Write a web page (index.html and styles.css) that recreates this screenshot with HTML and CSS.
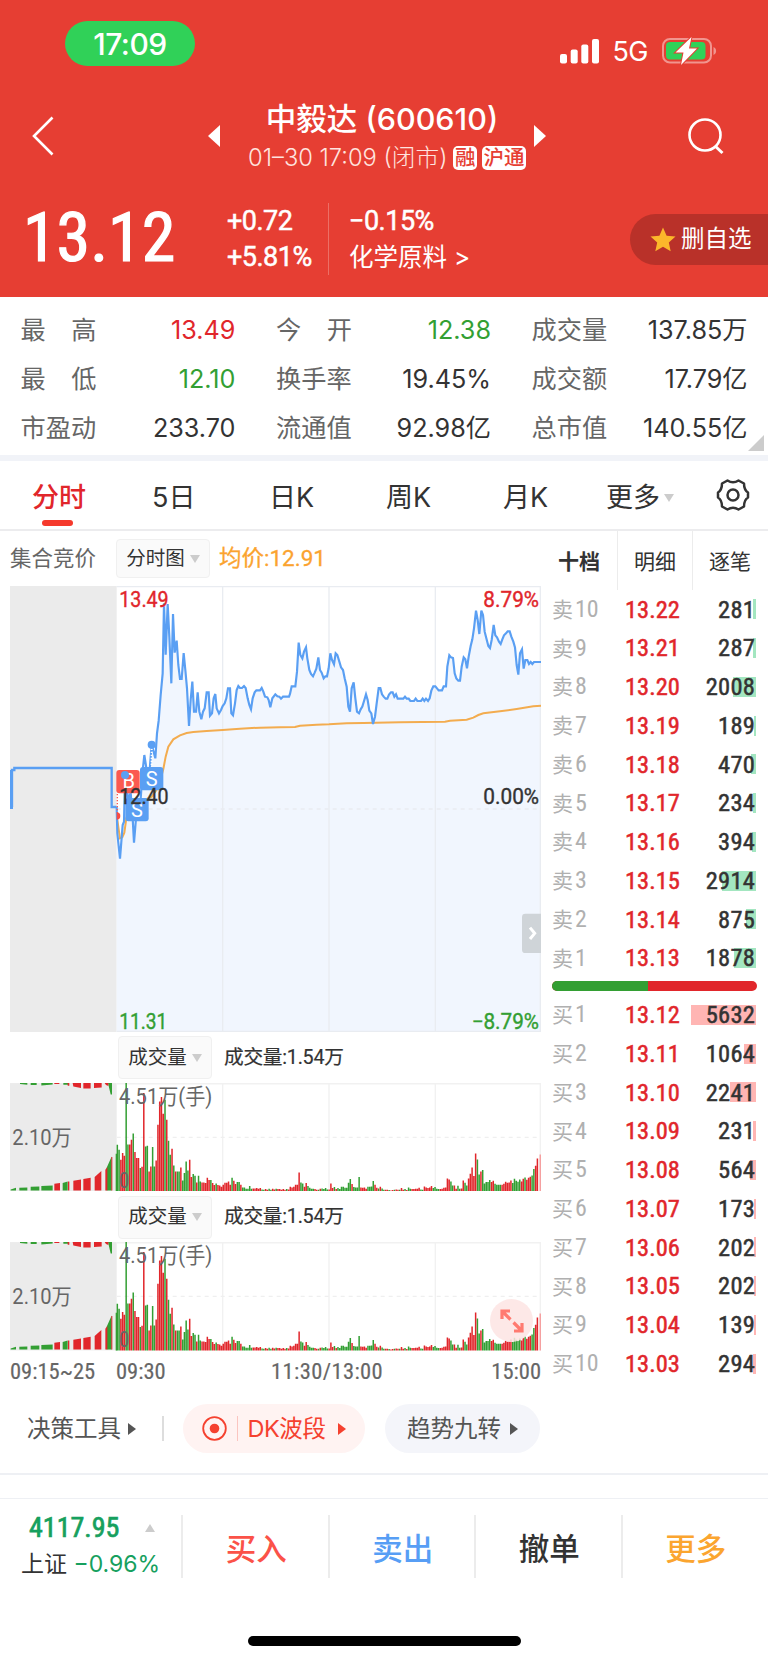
FILE: index.html
```html
<!DOCTYPE html>
<html lang="zh-CN">
<head>
    <meta charset="UTF-8">
    <meta name="viewport" content="width=device-width, initial-scale=1.0">
    <title>中毅达 (600610)</title>
    <link rel="stylesheet" href="styles.css">
</head>
<body>
    <header>
        <div class="status-bar">
            <span class="clock">17:09</span>
            <div class="status-right">
                <svg class="signal" width="40" height="25" viewBox="0 0 40 25" fill="#fff">
                    <rect x="0" y="15" width="7" height="9.5" rx="2"/>
                    <rect x="10.7" y="10.5" width="7" height="14" rx="2"/>
                    <rect x="21.3" y="5.5" width="7" height="19" rx="2"/>
                    <rect x="32" y="0" width="7" height="24.5" rx="2"/>
                </svg>
                <span class="network">5G</span>
                <svg width="55" height="28" viewBox="0 0 55 28">
                    <rect x="1" y="2" width="48" height="23.5" rx="7" fill="none" stroke="#fff" stroke-opacity=".45" stroke-width="2"/>
                    <rect x="4" y="5" width="39.5" height="17.5" rx="4" fill="#30d158"/>
                    <path d="M51.5 10v8c1.6-.7 2.6-2.200 2.600-4s-1-3.300-2.600-4z" fill="#fff" opacity=".45"/>
                    <path d="M29.500 0 13.500 15.500h8L19 28l16-16.500h-8z" fill="#fff" stroke="#e63e33" stroke-width="2" paint-order="stroke"/>
                </svg>
            </div>
        </div>

        <div class="title-bar">
            <svg class="back" width="24" height="42" viewBox="0 0 24 42"><path d="M21.500 2.500 3 21l18.500 18.500" fill="none" stroke="#fff" stroke-width="2.600"/></svg>
            <div class="title-box">
                <span class="tri-left"></span>
                <div class="title-text">
                    <h1>中毅达 (600610)</h1>
                    <p><span class="date">01–30 17:09 (闭市)</span><b class="tag">融</b><b class="tag">沪通</b></p>
                </div>
                <span class="tri-right"></span>
            </div>
            <svg class="search" width="36" height="38" viewBox="0 0 36 38"><circle cx="17" cy="18" r="15.500" fill="none" stroke="#fff" stroke-width="2.600"/><path d="M27 29l7.500 7" stroke="#fff" stroke-width="3"/></svg>
        </div>

        <div class="quote">
            <div class="price">13.12</div>
            <div class="change">
                <span>+0.72</span>
                <span>+5.81%</span>
            </div>
            <div class="sector">
                <span class="num">−0.15%</span>
                <span>化学原料 &gt;</span>
            </div>
            <div class="favor">
                <svg width="26" height="25" viewBox="0 0 26 25"><path d="M13 .5l3.600 8.200 8.900.900-6.700 5.900 1.900 8.800L13 19.700l-7.700 4.600 1.900-8.800L.5 9.600l8.900-.900z" fill="#fcb72b"/></svg>
                <span>删自选</span>
            </div>
        </div>
    </header>

    <section class="stats">
        <div class="stat"><label>最<i></i>高</label><span class="red">13.49</span></div>
        <div class="stat"><label>今<i></i>开</label><span class="green">12.38</span></div>
        <div class="stat"><label>成交量</label><span>137.85万</span></div>
        <div class="stat"><label>最<i></i>低</label><span class="green">12.10</span></div>
        <div class="stat"><label>换手率</label><span>19.45%</span></div>
        <div class="stat"><label>成交额</label><span>17.79亿</span></div>
        <div class="stat"><label>市盈动</label><span>233.70</span></div>
        <div class="stat"><label>流通值</label><span>92.98亿</span></div>
        <div class="stat"><label>总市值</label><span>140.55亿</span></div>
        <span class="corner"></span>
    </section>

    <nav class="tabs">
        <span class="tab active">分时</span>
        <span class="tab">5日</span>
        <span class="tab">日K</span>
        <span class="tab">周K</span>
        <span class="tab">月K</span>
        <span class="tab more">更多<i class="caret"></i></span>
        <svg width="34" height="32" viewBox="0 0 34 32" fill="none" stroke="#333" stroke-width="2.500"><path d="M11.500 1.500Q17 5 22.500 1.500L28 4.500Q28 11 32 13.500V18.500Q28 21 28 27.500L22.500 30.500Q17 27 11.500 30.500L6 27.500Q6 21 2 18.500V13.500Q6 11 6 4.500Z" stroke-linejoin="round"/><circle cx="17" cy="16" r="5.500"/></svg>
    </nav>

    <main>
        <div class="left">
            <div class="chart-head">
                <span class="auction">集合竞价</span>
                <span class="select">分时图<i class="caret"></i></span>
                <span class="avg">均价:12.91</span>
            </div>

            <!-- price chart, 3 units per pixel -->
            <svg class="price-chart" viewBox="30 48 1593 1338">
                <rect x="30" y="48" width="320" height="1338" fill="#ebebeb"/>
                <path id="priceArea" fill="#f1f6fe"/>
                <g fill="none" stroke="#e9ecf1" stroke-width="4">
                    <path d="M350 50H1621V1384H350M668 50V1384M987 50V1384M1306 50V1384"/>
                    <path d="M350 717H1621" stroke-dasharray="12 12"/>
                </g>
                <path d="M34 717V600" fill="none" stroke="#5a9ff3" stroke-width="10"/>
                <path d="M36 711V600H43V594H335V711H350" fill="none" stroke="#5a9ff3" stroke-width="7"/>
                <path d="M352 750L360 805L367 802L373 788L379 745L395 705L430 692L455 680L475 652L490 597L497 560L505 530L520 508L540 496L560 489L580 486L620 483L668 480L720 476L780 473L840 472L885 471L900 467L950 464L987 463L1040 460L1090 459L1200 457L1335 455L1350 452L1400 449L1420 443L1435 435L1450 430L1500 424L1550 417L1600 409L1623 407" fill="none" stroke="#f3ac4f" stroke-width="6"/>
                <path id="priceLine" fill="none" stroke="#5a9ff3" stroke-width="6.500"/>
                <path d="M455 536V592" stroke="#fff" stroke-width="6" stroke-dasharray="4 5"/>
                <path d="M352 672V728" stroke="#fb5a50" stroke-width="4" stroke-dasharray="4 5"/>
                <path d="M350 727a11 11 0 0 1 0 22z" fill="#fb4a40"/>
                <circle cx="455" cy="524" r="12" fill="#5a9ff3"/>
                <rect x="349" y="600" width="70" height="70" rx="9" fill="#fb5a50"/>
                <rect x="420" y="591" width="70" height="70" rx="9" fill="#5a9ff3"/>
                <rect x="376" y="684" width="70" height="70" rx="9" fill="#5a9ff3"/>
                <g class="mark">
                    <text x="386" y="655">B</text>
                    <text x="455" y="648">S</text>
                    <text x="411" y="740">S</text>
                </g>
                <circle cx="375" cy="615" r="12" fill="#5a9ff3"/>
                <g class="axis">
                    <text x="358" y="112" textLength="148" lengthAdjust="spacingAndGlyphs" class="up">13.49</text>
                    <text x="358" y="702" textLength="148" lengthAdjust="spacingAndGlyphs">12.40</text>
                    <text x="358" y="1377" textLength="144" lengthAdjust="spacingAndGlyphs" class="down">11.31</text>
                    <text x="1450" y="112" textLength="167" lengthAdjust="spacingAndGlyphs" class="up">8.79%</text>
                    <text x="1450" y="702" textLength="167" lengthAdjust="spacingAndGlyphs">0.00%</text>
                    <text x="1415" y="1377" textLength="202" lengthAdjust="spacingAndGlyphs" class="down">−8.79%</text>
                </g>
                <path d="M1623 1031H1576q-10 0-10 10v98q0 10 10 10H1623z" fill="#cfd4d8"/>
                <path d="M1590 1073L1604 1090L1590 1107" fill="none" stroke="#fff" stroke-width="9"/>
            </svg>

            <div class="vol-head">
                <span class="select">成交量<i class="caret"></i></span>
                <span class="vol-value">成交量:1.54万</span>
            </div>
            <svg class="vol-chart" viewBox="30 158 1593 325"></svg>

            <div class="vol-head">
                <span class="select">成交量<i class="caret"></i></span>
                <span class="vol-value">成交量:1.54万</span>
            </div>
            <div class="vol-wrap">
                <svg class="vol-chart" viewBox="30 158 1593 325"></svg>
                <span class="expand">
                    <svg width="24" height="24" viewBox="0 0 24 24" fill="none" stroke="#ff7a70" stroke-width="3.200"><path d="M2 10V2H10M2 2l8.500 8.500M22 14v8h-8M22 22l-8.500-8.500"/></svg>
                </span>
            </div>

            <div class="time-axis">
                <span>09:15~25</span>
                <span>09:30</span>
                <span>11:30/13:00</span>
                <span>15:00</span>
            </div>
        </div>

        <div class="book">
            <div class="book-tabs">
                <span class="on">十档</span>
                <span>明细</span>
                <span>逐笔</span>
            </div>
            <div id="sell" class="sell"></div>
            <div class="ratio"><i></i></div>
            <div id="buy" class="buy"></div>
        </div>
    </main>

    <div class="tools">
        <span class="tool">决策工具<i class="play"></i></span>
        <span class="pill dk">
            <svg width="25" height="25" viewBox="0 0 25 25"><circle cx="12.500" cy="12.500" r="11.300" fill="none" stroke="#f5412f" stroke-width="1.800"/><circle cx="12.500" cy="12.500" r="4.800" fill="#f5412f"/></svg>
            <b></b>DK波段<i class="play"></i>
        </span>
        <span class="pill">趋势九转<i class="play"></i></span>
    </div>

    <footer>
        <div class="index">
            <div class="index-top">4117.95<i></i></div>
            <div class="index-bottom">上证 <span>−0.96%</span></div>
        </div>
        <span class="btn buy-btn">买入</span>
        <span class="btn sell-btn">卖出</span>
        <span class="btn">撤单</span>
        <span class="btn more-btn">更多</span>
    </footer>
    <div class="home"></div>

    <script>
        // price line, x y pairs
        var points = "350,711 352,790 360,866 368,765 372,755 375,615 385,690 392,668 398,745 402,818 408,745 413,690 421,700 428,602 433,555 440,600 448,612 455,524 460,542 466,565 471,490 476,452 482,375 488,310 492,100 497,254 503,102 508,200 514,340 519,132 524,248 530,212 535,285 540,327 545,327 551,249 556,300 561,355 567,468 572,390 577,335 582,425 588,425 593,367 598,425 604,448 609,425 614,415 620,367 626,367 630,437 636,430 641,385 646,372 650,415 657,430 663,420 668,408 674,400 679,385 684,355 690,355 694,430 699,436 705,400 710,360 715,348 720,354 726,354 732,348 737,354 743,385 748,405 753,418 758,385 764,367 769,361 780,361 785,354 790,365 795,380 802,382 806,390 811,412 817,385 826,373 832,379 838,380 843,386 849,380 867,380 870,372 875,349 886,349 891,305 896,218 901,255 907,265 912,245 918,232 922,265 928,300 933,312 939,319 944,308 949,296 955,262 960,300 965,308 971,325 976,319 981,319 986,295 991,250 996,270 1002,283 1007,250 1012,255 1018,275 1023,292 1029,300 1034,325 1040,350 1045,410 1050,425 1055,355 1061,337 1066,385 1071,425 1077,430 1082,418 1087,410 1093,390 1098,373 1103,390 1108,422 1114,430 1119,462 1125,440 1130,400 1136,354 1141,354 1146,373 1151,380 1157,386 1162,386 1167,374 1173,367 1178,367 1183,380 1188,373 1193,386 1210,386 1215,380 1220,386 1226,386 1231,393 1242,393 1247,386 1252,393 1263,393 1268,386 1273,393 1278,386 1284,393 1289,385 1294,362 1300,349 1306,349 1311,355 1316,361 1326,361 1331,349 1338,349 1342,290 1348,256 1353,262 1359,264 1364,310 1369,325 1375,332 1380,332 1385,290 1391,262 1396,268 1401,295 1406,260 1412,228 1417,208 1422,175 1428,122 1433,150 1438,192 1444,122 1449,135 1454,185 1459,205 1465,228 1470,234 1475,210 1481,165 1486,196 1491,202 1497,215 1502,222 1507,208 1512,196 1518,190 1523,184 1529,184 1534,200 1540,215 1545,232 1550,285 1555,314 1560,250 1566,238 1571,296 1576,270 1582,270 1587,282 1592,276 1597,282 1602,276 1623,276";
        document.getElementById("priceLine").setAttribute("d", "M" + points.replace(/ /g, "L"));
        document.getElementById("priceArea").setAttribute("d", "M" + points.replace(/ /g, "L") + "V1386H350Z");

        // volume per minute, r = up, g = down
        var vol = ("g140 g125 r95 r115 r107 g325 g141 r141 r155 g174 r118 r100 r100 g70 r74 r295 g135 g137 r60 r75 g133 g75 r93 r200 r270 r283 r233 g275 r215 g152 " +
            "g110 r128 g78 r60 g60 g60 r72 g33 g55 g90 g63 r95 r43 g52 g47 r27 g47 g30 r27 r27 r25 r41 r34 g34 r25 r19 g24 r19 r18 r14 " +
            "r20 r26 r26 r30 r20 g41 r32 r22 g28 g28 r20 g12 g12 g8 g8 g16 g8 r9 r9 r10 r8 r10 g6 g5 r7 r5 g8 g5 r8 r6 " +
            "g8 r7 r7 r5 r7 r5 g7 r6 r14 r12 r14 r20 r20 r57 g27 g24 r14 r25 g16 g11 g8 g8 r7 r5 g5 r8 g9 g7 g10 g6 " +
            "r6 r24 r10 g13 r7 g10 g7 g14 g14 g11 g11 g26 g37 r22 g13 g12 g12 g43 r12 r11 r12 r8 g14 g14 g15 g31 r20 r11 g9 r14 " +
            "g9 g5 r5 r5 g4 r3 r4 g5 r6 r5 g5 r10 r5 g7 r4 g12 g8 r7 r7 r8 r8 r11 g6 g5 r15 r12 r10 r12 r16 g10 " +
            "g13 g8 g7 r7 r8 r11 r12 r39 r36 g30 g18 r18 r8 g17 g8 r9 r33 g26 g18 r39 r53 r72 r46 r114 g96 g51 r60 g64 g24 g28 " +
            "g28 g34 r28 r32 g23 g20 g20 g20 r20 r23 r29 r26 r27 r33 g25 g38 g32 g29 g36 r30 r38 g42 r35 r41 r44 g48 g67 r77 r99").split(" ");

        function bars(color) {
            var d = "";
            vol.forEach(function(v, i) {
                if (v[0] == color) {
                    d += "M" + (352 + i * 5.295).toFixed(1) + " 483v-" + v.slice(1);
                }
            });
            return d;
        }

        var volume =
            '<rect x="30" y="158" width="320" height="325" fill="#ebebeb"/>' +
            '<path d="M350 160H1621V483M668 160V483M987 160V483M1306 160V483" fill="none" stroke="#f1f1f1" stroke-width="4"/>' +
            '<path d="M350 321H1621" stroke="#efefef" stroke-width="4" stroke-dasharray="12 12"/>' +
            // call auction block
            '<path d="M32 480V477L48 472V480zM58 480V472L82 471V480zM92 480V469L118 468V480zM124 480V467L158 465V480zM188 480V458L203 453V480zM320 480V412L335 378V480zM60 158H82V163L60 161zM92 158H110V164H92zM124 158H158V162L124 165zM190 158H204V163H190zM324 158H336V192H332zM347 370H351V483H347z" fill="#339f33"/>' +
            '<path d="M163 480V460L180 458V480zM204 480V453H208V480zM220 480V451L243 447V480zM250 480V446L272 442V480zM284 480V440L304 422V480zM316 480V418L322 410V480zM334 480V380H337V480zM163 158H178V161H163zM203 158H208V166H203zM218 158H243V173L220 168zM250 158H272V174H250zM282 158H305V171L282 173zM314 158H325V167L318 164z" fill="#e1262b"/>' +
            '<path d="' + bars("g") + '" stroke="#339f33" stroke-width="4.500"/>' +
            '<path d="' + bars("r") + '" stroke="#e1262b" stroke-width="4.500"/>' +
            '<path d="M1621 483V372" stroke="#f5a0a0" stroke-width="5"/>' +
            '<g class="vol-text"><text x="357" y="220" textLength="280" lengthAdjust="spacingAndGlyphs">4.51万(手)</text>' +
            '<text x="37" y="343" textLength="178" lengthAdjust="spacingAndGlyphs">2.10万</text>' +
            '<text x="357" y="474" textLength="31" lengthAdjust="spacingAndGlyphs">0</text></g>';
        document.querySelectorAll(".vol-chart").forEach(function(svg) {
            svg.innerHTML = volume;
        });

        // order book
        function rows(id, name, list) {
            document.getElementById(id).innerHTML = list.map(function(row) {
                return '<div class="row"><label>' + name + '<em>' + row[0] + '</em></label><span class="p">' + row[1] +
                    '</span><span class="v"><i style="width:' + (row[2] / 5632 * 65).toFixed(1) + 'px"></i><em>' + row[2] + '</em></span></div>';
            }).join("");
        }
        rows("sell", "卖", [[10, "13.22", 281], [9, "13.21", 287], [8, "13.20", 2008], [7, "13.19", 189], [6, "13.18", 470],
            [5, "13.17", 234], [4, "13.16", 394], [3, "13.15", 2914], [2, "13.14", 875], [1, "13.13", 1878]]);
        rows("buy", "买", [[1, "13.12", 5632], [2, "13.11", 1064], [3, "13.10", 2241], [4, "13.09", 231], [5, "13.08", 564],
            [6, "13.07", 173], [7, "13.06", 202], [8, "13.05", 202], [9, "13.04", 139], [10, "13.03", 294]]);
    </script>
</body>
</html>
```
FILE: styles.css
```css
* {
    box-sizing: border-box;
}

body {
    font-family: Inter, "Noto Sans CJK SC", sans-serif;
    line-height: 1.2;
    margin: 0;
    width: 768px;
    height: 1663px;
    overflow: hidden;
    background-color: #fff;
    color: #333;
}

i, em {
    font-style: normal;
}

svg {
    display: block;
    flex: none;
}

span, label {
    white-space: nowrap;
}

.red { color: #e1262b; }
.green { color: #339f33; }

.caret {
    display: inline-block;
    border: 5.5px solid transparent;
    border-top: 8px solid #ccc;
    border-bottom: 0;
}

/* red header */
header {
    height: 297px;
    background-color: #e63e33;
    color: #fff;
}

.status-bar {
    height: 80px;
    padding: 21px 51px 0 65px;
    display: flex;
    justify-content: space-between;
}

.clock {
    width: 130px;
    height: 45px;
    line-height: 46px;
    border-radius: 23px;
    background-color: #30d158;
    text-align: center;
    font-size: 30px;
    font-weight: 500;
    letter-spacing: -0.5px;
}

.status-right {
    height: 60px;
    display: flex;
    align-items: center;
}

.network {
    font-size: 27px;
    margin: 2px 14px 0 12px;
    letter-spacing: -0.5px;
}

.title-bar {
    height: 110px;
    padding: 1px 44px 0 31px;
    display: flex;
    justify-content: space-between;
    align-items: center;
}

.title-box {
    display: flex;
    align-items: center;
    margin-left: 11px;
}

.title-text {
    width: 314px;
    text-align: center;
}

h1 {
    margin: 0;
    padding-left: 10px;
    font-size: 30.5px;
    line-height: 44px;
    font-weight: 500;
}

.title-text p {
    margin: 0;
    height: 34px;
    padding-left: 25px;
    display: flex;
    align-items: center;
    justify-content: center;
    font-size: 23.7px;
}

.date {
    color: #ffe3df;
    font-weight: 300;
    margin-right: 6px;
    margin-top: 1px;
}

.tag {
    background-color: #fff;
    color: #e63e33;
    border-radius: 5px;
    padding: 0 1.5px;
    margin-right: 5px;
    font-size: 20.5px;
    line-height: 24px;
    font-weight: 500;
}

.tri-left,
.tri-right {
    border: 11.5px solid transparent;
    border-left: 0;
    border-right: 12px solid #fff;
}

.tri-right {
    border-right: 0;
    border-left: 12px solid #fff;
}

.quote {
    height: 98px;
    display: flex;
    align-items: center;
    font-family: Roboto, "Noto Sans CJK SC", sans-serif;
}

.price {
    width: 227px;
    padding-left: 23px;
    font-size: 68px;
    font-stretch: 85%;
    -webkit-text-stroke: 1.2px #fff;
}

.change,
.sector {
    display: flex;
    flex-direction: column;
    font-size: 27px;
    line-height: 36px;
    font-stretch: 88%;
    letter-spacing: -0.5px;
    -webkit-text-stroke: 0.5px #fff;
}

.change {
    width: 102px;
    border-right: 1px solid #ec6f66;
}

.sector {
    width: 281px;
    padding-left: 20px;
}

.sector span + span {
    font-family: Inter, "Noto Sans CJK SC", sans-serif;
    font-size: 24.5px;
    letter-spacing: 0;
    -webkit-text-stroke: 0;
}

.favor {
    flex: 1;
    height: 51px;
    margin-left: 20px;
    padding-left: 20px;
    border-radius: 26px 0 0 26px;
    background-color: #b93129;
    display: flex;
    align-items: center;
    gap: 5px;
    font-size: 23.5px;
}

/* key figures */
.stats {
    height: 158px;
    padding: 9px 20px 0 20.5px;
    display: grid;
    grid-template-columns: 215px 215px 216px;
    grid-auto-rows: 49px;
    column-gap: 40.500px;
    position: relative;
}

.stat {
    display: flex;
    align-items: center;
    justify-content: space-between;
    font-size: 25.2px;
}

.stat label {
    color: #666;
    width: 76px;
    display: flex;
    justify-content: space-between;
}

.corner {
    position: absolute;
    right: 4px;
    bottom: 4px;
    border-left: 16px solid transparent;
    border-bottom: 16px solid #ccc;
}

/* period tabs */
.tabs {
    height: 76px;
    border-top: 6px solid #f1f3f8;
    border-bottom: 2px solid #ececee;
    padding: 0 18px 0 32px;
    display: flex;
    align-items: center;
    font-size: 27px;
}

.tab {
    width: 117px;
    height: 100%;
    line-height: 74px;
}

.tab.more {
    width: 85px;
    margin-right: auto;
    margin-left: -14px;
}

.tab.active {
    width: 120px;
    color: #e1262b;
    font-weight: 500;
}

.tab.active::after {
    content: "";
    display: block;
    width: 31px;
    height: 6px;
    margin: -15px 0 0 10px;
    border-radius: 3px;
    background-color: #f5392c;
}

.tab .caret {
    margin: 0 0 5px 4px;
}

main {
    height: 857px;
    display: flex;
}

.left {
    width: 552px;
    padding-left: 10px;
}

.chart-head {
    height: 54.500px;
    padding-top: 1px;
    display: flex;
    align-items: center;
    font-size: 21.500px;
}

.auction {
    width: 106px;
    color: #666;
}

.select {
    width: 94px;
    height: 39px;
    border: 1px solid #f0f0f0;
    border-radius: 4px;
    background-color: #fafafa;
    display: flex;
    align-items: center;
    justify-content: center;
    gap: 5px;
    font-size: 19.500px;
}

.avg {
    margin-left: 9px;
    color: #fba32f;
    font-family: Roboto, "Noto Sans CJK SC", sans-serif;
    font-size: 22.500px;
    font-stretch: 92%;
    -webkit-text-stroke: 0.3px #fba32f;
}

.price-chart {
    width: 531px;
    height: 446px;
}

.axis text {
    font-family: Roboto, sans-serif;
    font-size: 66px;
    font-stretch: 88%;
    fill: #333;
    stroke: #333;
    stroke-width: 1.2px;
}

.axis .up { fill: #e1262b; stroke: #e1262b; }
.axis .down { fill: #339f33; stroke: #339f33; }

.mark text {
    font-family: Roboto, sans-serif;
    font-size: 60px;
    fill: #fff;
    text-anchor: middle;
}

.vol-head {
    height: 51px;
    padding: 4px 0 3px 108px;
    display: flex;
    align-items: center;
    gap: 12px;
    font-family: Roboto, "Noto Sans CJK SC", sans-serif;
    font-size: 19.700px;
    font-stretch: 88%;
}

.vol-head .select {
    height: 43px;
}

.vol-value {
    letter-spacing: -0.25px;
    -webkit-text-stroke: 0.2px #333;
}

.vol-chart {
    width: 531px;
    height: 108.500px;
}

.vol-text text {
    font-family: Roboto, "Noto Sans CJK SC", sans-serif;
    font-size: 64px;
    fill: #666;
}

.vol-wrap {
    position: relative;
}

.expand {
    position: absolute;
    right: 19px;
    top: 57px;
    width: 43px;
    height: 43px;
    padding: 9.500px;
    border-radius: 50%;
    background-color: rgba(253, 228, 227, 0.85);
}

.time-axis {
    width: 531px;
    padding-top: 7px;
    display: flex;
    font-family: Roboto, sans-serif;
    font-size: 22.500px;
    font-stretch: 87%;
    color: #666;
    -webkit-text-stroke: 0.2px #666;
}

.time-axis span:nth-child(1) { width: 106px; }
.time-axis span:nth-child(2) { width: 155px; }
.time-axis span:nth-child(3) { letter-spacing: 0.4px; }
.time-axis span:nth-child(4) { margin-left: auto; }

/* order book */
.book {
    width: 216px;
}

.book-tabs {
    height: 59px;
    display: flex;
    font-size: 21px;
    line-height: 61px;
    text-align: center;
}

.book-tabs span {
    width: 75px;
    border-left: 1px solid #ececec;
}

.book-tabs .on {
    width: 65px;
    padding-right: 11px;
    border: 0;
    font-weight: 700;
}

.row {
    height: 38.750px;
    padding-right: 12px;
    display: flex;
    align-items: center;
    font-family: Roboto, "Noto Sans CJK SC", sans-serif;
    font-size: 24.500px;
    font-stretch: 86%;
}

.row label {
    width: 73px;
    color: #b0b0b0;
    font-size: 21px;
}

.row label em {
    font-size: 24px;
    margin-left: 2px;
}

.row .p {
    color: #e1262b;
    -webkit-text-stroke: 0.5px #e1262b;
}

.row .v {
    flex: 1;
    display: grid;
    justify-items: end;
    align-items: center;
}

.row .v i,
.row .v em {
    grid-area: 1 / 1;
}

.row .v em {
    margin-right: 1px;
    letter-spacing: 0.2px;
    -webkit-text-stroke: 0.5px #333;
}

.row .v i {
    height: 20px;
    background-color: #a3e6c0;
}

.buy .v i {
    background-color: #ffb5b3;
}

.ratio {
    width: 205px;
    height: 10px;
    margin: 3px 0 5px;
    border-radius: 5px;
    background-color: #e1262b;
    overflow: hidden;
}

.ratio i {
    display: block;
    width: 96px;
    height: 10px;
    background-color: #339f33;
}

/* tools under the chart */
.tools {
    height: 87px;
    padding: 16px 0 0 27px;
    border-bottom: 2px solid #eef0f4;
    display: flex;
    align-items: flex-start;
    font-size: 23.500px;
    color: #555;
    line-height: 49px;
}

.play {
    border: 6px solid transparent;
    border-left: 8.500px solid #555;
    border-right: 0;
}

.tool {
    display: flex;
    align-items: center;
    width: 156px;
}

.tool .play {
    margin-left: 7px;
}

.tool::after {
    content: "";
    width: 2px;
    height: 25px;
    margin-left: 26px;
    background-color: #ddd;
}

.pill {
    width: 155px;
    height: 49px;
    border-radius: 25px;
    background-color: #f4f5fa;
    display: flex;
    align-items: center;
    justify-content: center;
}

.pill .play {
    margin-left: 9px;
}

.dk {
    width: 182px;
    margin-right: 20px;
    background-color: #fff3f2;
    color: #f5412f;
    letter-spacing: -0.4px;
}

.dk b {
    width: 1px;
    height: 25px;
    margin: 0 9px 0 10px;
    background-color: #fbc5c0;
}

.dk .play {
    margin-left: 12px;
    border-left-color: #f5412f;
}

/* trade bar */
footer {
    height: 110px;
    margin-top: 23px;
    padding-top: 16px;
    border-top: 1px solid #eef0f4;
    display: flex;
}

.index {
    width: 181px;
    height: 63px;
    padding-left: 21px;
    color: #16a05e;
}

.index-top {
    display: flex;
    align-items: center;
    justify-content: space-between;
    height: 26px;
    padding: 0 26px 0 8px;
    font-family: Roboto, sans-serif;
    font-size: 28px;
    font-stretch: 85%;
    -webkit-text-stroke: 0.7px #16a05e;
}

.index-top i {
    border: 5.500px solid transparent;
    border-top: 0;
    border-bottom: 8px solid #ccc;
}

.index-bottom {
    margin-top: 5px;
    font-size: 23px;
    line-height: 36px;
    white-space: nowrap;
    color: #333;
}

.index-bottom span {
    color: #16a05e;
}

.btn {
    width: 146.500px;
    height: 63px;
    padding-left: 2px;
    border-left: 2px solid #ececec;
    text-align: center;
    font-size: 30.500px;
    line-height: 67px;
    font-weight: 500;
}

.buy-btn { color: #fb5248; }
.sell-btn { color: #579ef5; }
.more-btn { color: #fba52f; }

.home {
    width: 273px;
    height: 10px;
    margin: 28px auto 0 248px;
    border-radius: 5px;
    background-color: #000;
}
```
